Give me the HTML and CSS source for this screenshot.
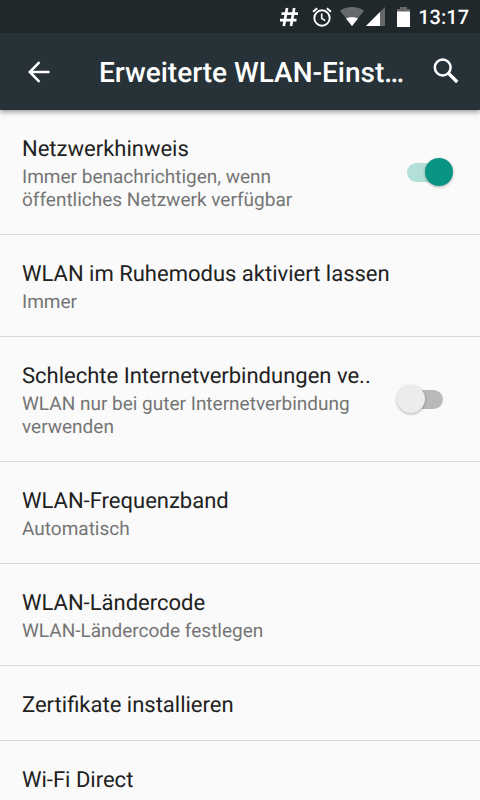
FILE: index.html
```html
<!DOCTYPE html>
<html lang="de">
<head>
<meta charset="utf-8">
<meta name="viewport" content="width=device-width, initial-scale=1">
<title>Erweiterte WLAN-Einstellungen</title>
<link rel="stylesheet" href="styles.css">
</head>
<body>
<div class="status-bar">
  <svg class="icon-hash" width="18" height="18" viewBox="0 0 18 18" aria-hidden="true"><path d="M7 0 3.800 18M14.200 0 11 18M1.500 5.600H18M0 12.200H16.500" fill="none" stroke="#fff" stroke-width="2.700"/></svg>
  <svg class="icon-alarm" width="20" height="20" viewBox="0 0 20 20" aria-hidden="true"><g fill="none" stroke="#fff"><circle cx="10" cy="11" r="7.700" stroke-width="1.900"/><path d="M1 4.800 5.200 1.200M19 4.800 14.800 1.200" stroke-width="2"/><path d="M9.700 6.500V11.300L13.200 13.700" stroke-width="1.600"/></g></svg>
  <svg class="icon-wifi" width="24" height="19" viewBox="0 0 24 19" aria-hidden="true"><path d="M0 3.800C7-1.200 17-1.200 24 3.800L12 19Z" fill="#65696b"/><path d="M6 11.500C9.500 9.800 14.500 9.800 18 11.500L12 19Z" fill="#fff"/></svg>
  <svg class="icon-signal" width="19" height="19" viewBox="0 0 19 19" aria-hidden="true"><path d="M0 19 19 0V19Z" fill="#65696b"/><path d="M0 19 14 5V19Z" fill="#fff"/></svg>
  <svg class="icon-battery" width="13" height="20" viewBox="0 0 13 20" aria-hidden="true"><path d="M0 2H3V0H10V2H13V5H0Z" fill="#65696b"/><path d="M0 4.500H13V20H0Z" fill="#fff"/></svg>
  <time class="clock">13:17</time>
</div>
<header class="app-bar">
  <button class="icon-button" type="button" aria-label="Zurück">
    <svg width="22" height="22" viewBox="0 0 22 22"><path d="M21.500 11H2M11.500 1.200 1.800 11 11.500 20.800" fill="none" stroke="#fff" stroke-width="2.500"/></svg>
  </button>
  <h1 class="app-title">Erweiterte WLAN-Einstellungen</h1>
  <button class="icon-button" type="button" aria-label="Suchen">
    <svg width="26" height="26" viewBox="0 0 26 26"><g fill="none" stroke="#fff"><circle cx="9.700" cy="8.500" r="7.900" stroke-width="2.500"/><path d="M15.200 14 24.200 23" stroke-width="3.200"/></g></svg>
  </button>
</header>
<main class="settings">
  <label class="row">
    <span class="text"><span class="title">Netzwerkhinweis</span><span class="summary">Immer benachrichtigen, wenn öffentliches Netzwerk verfügbar</span></span>
    <input class="switch" type="checkbox" role="switch" checked>
  </label>
  <div class="row"><div class="text"><span class="title">WLAN im Ruhemodus aktiviert lassen</span><span class="summary">Immer</span></div></div>
  <label class="row">
    <span class="text"><span class="title">Schlechte Internetverbindungen ve..</span><span class="summary">WLAN nur bei guter Internetverbindung verwenden</span></span>
    <input class="switch" type="checkbox" role="switch">
  </label>
  <div class="row"><div class="text"><span class="title">WLAN-Frequenzband</span><span class="summary">Automatisch</span></div></div>
  <div class="row"><div class="text"><span class="title">WLAN-Ländercode</span><span class="summary">WLAN-Ländercode festlegen</span></div></div>
  <div class="row"><div class="text"><span class="title">Zertifikate installieren</span></div></div>
  <div class="row"><div class="text"><span class="title">Wi-Fi Direct</span></div></div>
</main>
</body>
</html>
```
FILE: styles.css
```css
* { box-sizing: border-box; }

body {
  margin: 0;
  height: 100vh;
  display: flex;
  flex-direction: column;
  background: #fafafa;
  font-family: Roboto, sans-serif;
  text-rendering: geometricPrecision;
}

svg { display: block; flex: none; overflow: visible; }

.status-bar {
  flex: none;
  height: 33px;
  padding: 0 11px;
  display: flex;
  align-items: center;
  justify-content: flex-end;
  background: #20282c;
  color: #fff;
}

.icon-alarm { margin-left: 14px; }
.icon-wifi { margin-left: 8px; }
.icon-signal { margin-left: 2px; }
.icon-battery { margin-left: 12px; }

.clock {
  margin-left: 8px;
  font-size: 20px;
  line-height: 24px;
  font-weight: 500;
}

.app-bar {
  flex: none;
  z-index: 1;
  height: 77px;
  padding: 0 10px 0 15px;
  display: flex;
  align-items: center;
  background: #263238;
  color: #fff;
  box-shadow: 0 2px 5px rgba(0, 0, 0, 0.4);
}

.icon-button {
  flex: none;
  width: 48px;
  height: 48px;
  padding: 0;
  border: 0;
  background: none;
  display: grid;
  place-items: center;
}

.app-title {
  flex: 1;
  min-width: 0;
  margin: 0 12px 0 36px;
  padding-top: 2px;
  font-size: 28px;
  line-height: 36px;
  font-weight: 500;
  white-space: nowrap;
  overflow: hidden;
  text-overflow: ellipsis;
}

.settings {
  flex: 1;
  min-height: 0;
  overflow-y: auto;
  scrollbar-width: none;
}

.row {
  display: flex;
  align-items: center;
  gap: 22px;
  padding: 0 27px 0 22px;
  border-bottom: 1px solid #d8d8d8;
}

.text {
  flex: 1;
  min-width: 0;
  padding: 27px 0 21px;
  display: flex;
  flex-direction: column;
}

.title {
  color: #212121;
  font-size: 22px;
  line-height: 26px;
  white-space: nowrap;
}

.summary {
  margin: 2px 0;
  color: #757575;
  font-size: 19px;
  line-height: 23px;
}

.switch {
  appearance: none;
  flex: none;
  position: relative;
  width: 56px;
  height: 28px;
  margin: 0;
  display: flex;
  align-items: center;
}

.switch::before {
  content: "";
  width: 36px;
  height: 19px;
  margin: 0 10px;
  border-radius: 10px;
  background: #b9b9b9;
}

.switch::after {
  content: "";
  position: absolute;
  left: 0;
  top: 0;
  width: 28px;
  height: 28px;
  border-radius: 50%;
  background: #ececec;
  box-shadow: 0 1px 3px rgba(0, 0, 0, 0.3);
}

.switch:checked::before { background: #b2dfd7; }
.switch:checked::after {
  left: auto;
  right: 0;
  background: #099583;
}
```
